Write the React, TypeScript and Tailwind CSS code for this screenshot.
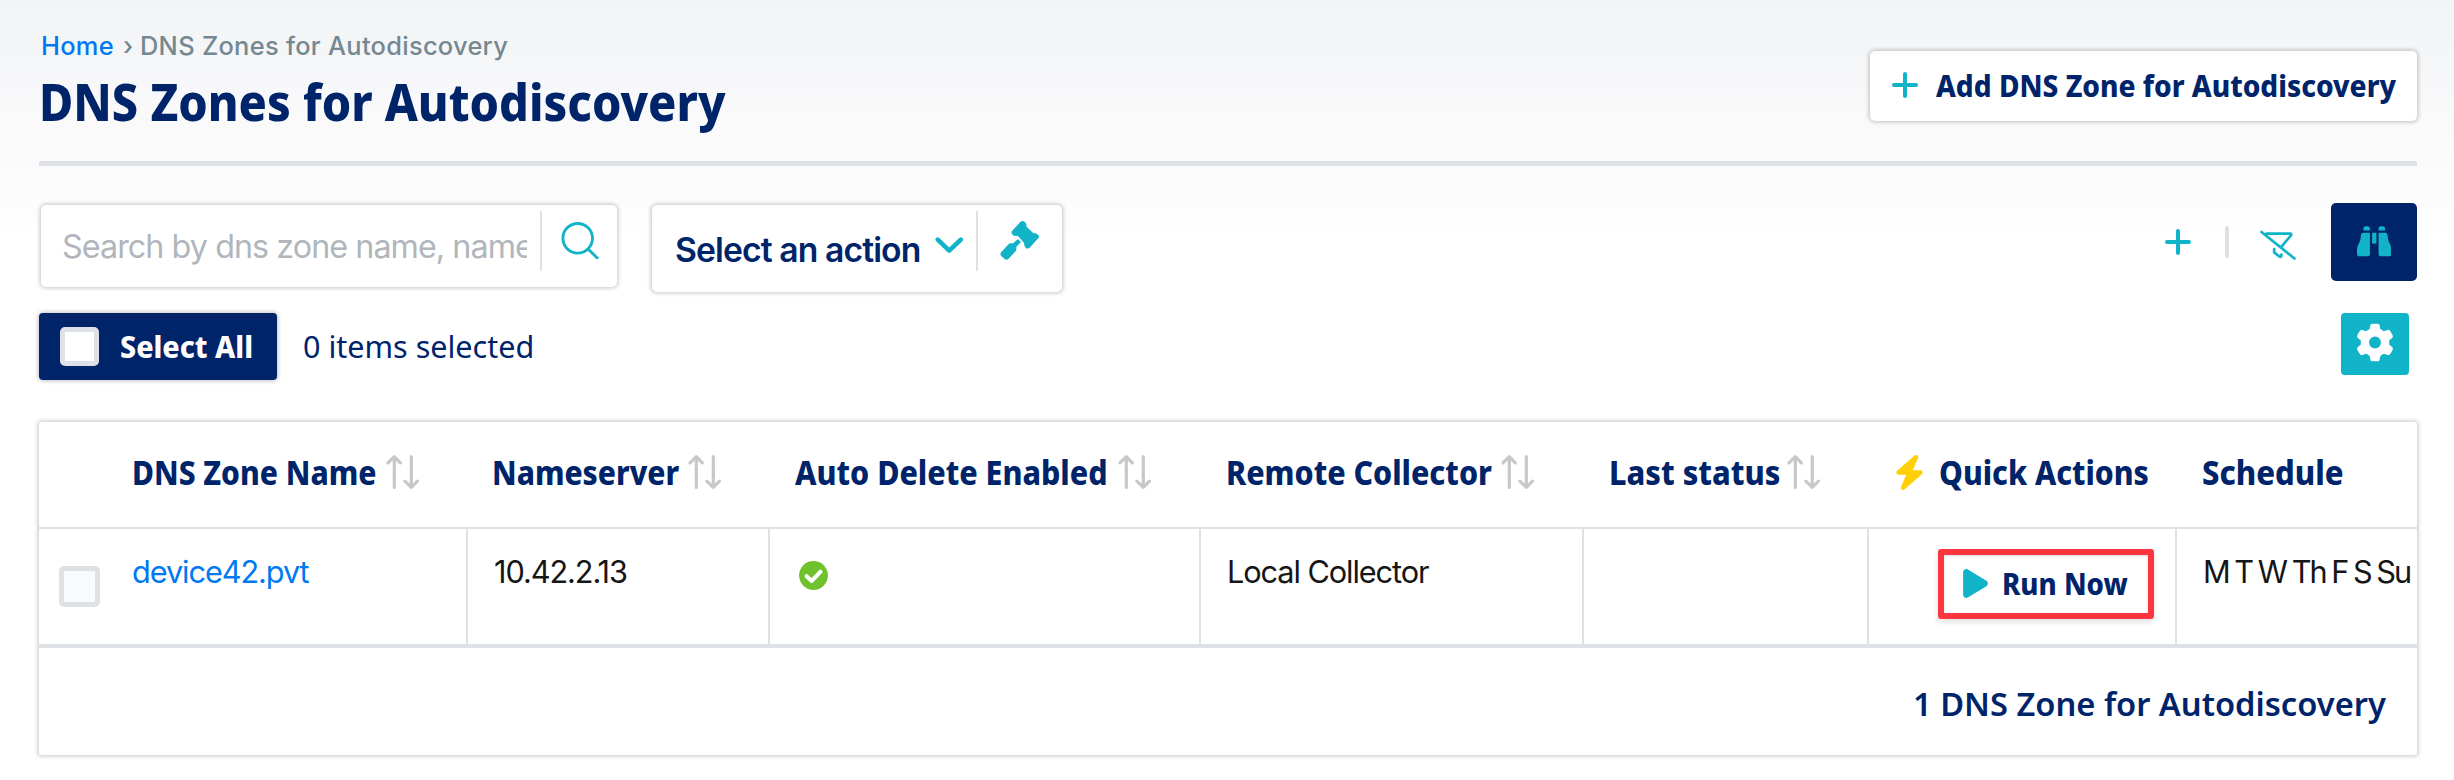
import type { ReactNode } from "react";
import { FaBinoculars, FaBolt, FaGear, FaPlay } from "react-icons/fa6";

function Plus() {
  return (
    <svg width="26" height="26" viewBox="0 0 26 26" fill="none" stroke="#10b3c8" strokeWidth="4" strokeLinecap="round" className="shrink-0">
      <path d="M13 2v22M2 13h22" />
    </svg>
  );
}

function SortArrows() {
  return (
    <svg width="33" height="36" viewBox="0 0 33 36" fill="none" stroke="#c8c8c8" strokeWidth="3.2" strokeLinecap="round" strokeLinejoin="round" className="ml-[9px] shrink-0">
      <path d="M8.3 33.5V2.8M2 8.8l6.3-6.2 6 6.2M25.3 2.5v30.7M18.9 27.2l6.4 6.2 6.2-6.2" />
    </svg>
  );
}

function SearchIcon() {
  return (
    <svg width="38" height="38" viewBox="0 0 38 38" fill="none" stroke="#10b3c8" strokeWidth="2.9" strokeLinecap="round">
      <circle cx="16.7" cy="17.3" r="14.8" />
      <path d="M27 28l9.3 9" />
    </svg>
  );
}

function Gavel() {
  return (
    <svg width="41" height="41" viewBox="0 0 41 41" fill="#10b3c8">
      <path d="M21.5 1.8Q23.9.2 26 2.2T27.2 6.3L34.3 13.3Q36.8 12.8 38.6 14.4Q41.2 16.4 39 18.6L30.6 27.8Q28.6 29.6 26.5 27.4Q24.8 25.8 25.3 23.3L18.7 15.8Q15.6 16.6 13.7 14.9Q11.6 12.6 13.2 10.8Z" />
      <path d="M18.7 18.9L22 22L17.4 26.8V29Q17.3 30.4 16.4 31.4L9.3 39Q7.4 40.6 5.6 39L2.2 36Q.6 34 2.2 32.3L9.2 24.4Q10.4 23.2 12 23.2H14.3Z" />
    </svg>
  );
}

function FilterSlash() {
  return (
    <svg width="38" height="32" viewBox="0 0 38 32" fill="none" stroke="#10b3c8" strokeWidth="2.7" strokeLinecap="round" strokeLinejoin="round">
      <path d="M2.5 3L35.5 29.5M7.5 4.6H32Q32.6 5.6 31.8 6.6L22.5 17.6M15.2 20v3.4L20.8 27.8Q22.6 28.2 22.4 25.6" />
    </svg>
  );
}

function CheckCircle() {
  return (
    <svg width="29" height="29" viewBox="0 0 29 29" fill="none" className="mt-[9px] ml-[3px]">
      <circle cx="14.5" cy="14.5" r="14.4" fill="#70c22d" />
      <path d="M7.6 15.2L12.6 20L21.6 10.6" stroke="#fff" strokeWidth="4" strokeLinecap="round" strokeLinejoin="round" />
    </svg>
  );
}

function Narrow({ children, width, scale, className = "" }: { children: ReactNode; width: string; scale: string; className?: string }) {
  return (
    <span className={`block shrink-0 ${width}`}>
      <span className={`block w-max origin-left font-['Noto_Sans',sans-serif] whitespace-nowrap ${scale} ${className}`}>{children}</span>
    </span>
  );
}

const panel = "bg-white shadow-[0_0_4px_1px_rgba(0,0,0,0.24)]";
const columns = "grid grid-cols-[429px_302px_431px_383px_285px_308px_240px]";
const th = "text-[33.8px] leading-[40px] font-extrabold";
const td = "border-r-2 border-[#dee2e6] pt-[23px] pl-[26px]";

function Box({ className }: { className: string }) {
  return <span className={`block shrink-0 rounded-[5px] border-[5px] border-[#dee2e6] ${className}`} />;
}

export default function App() {
  return (
    <div className="h-[780px] w-[2454px] overflow-hidden bg-white bg-[linear-gradient(180deg,#f3f4f6_0px,#f5f6f8_60px,#fafafb_125px,#fcfcfc_190px,#ffffff_240px)] pr-[37px] pl-[39px] font-['Inter',sans-serif] text-[#00246a]">
      <header className="flex h-[166px] items-start justify-between border-b-[5px] border-[#dee2e6]">
        <div className="pt-[26px]">
          <nav className="flex h-[43px] pl-[2px] text-[25.4px] leading-[40px] font-medium tracking-[0.3px]">
            <a className="w-[82px] text-[#0079f2]">Home</a>
            <span className="w-[17px] text-[#748892]">›</span>
            <span className="text-[#748892]">DNS Zones for Autodiscovery</span>
          </nav>
          <h1>
            <Narrow width="w-[690px]" scale="scale-x-[0.911]" className="text-[51.4px] leading-[64px] font-extrabold">DNS Zones for Autodiscovery</Narrow>
          </h1>
        </div>
        <button className={`mt-[51px] flex h-[70px] w-[547px] items-center rounded-[5px] pb-[2px] pl-[22px] ${panel}`}>
          <Plus />
          <Narrow width="ml-[18px] w-[461px]" scale="scale-x-[0.905]" className="text-[31px] leading-[40px] font-extrabold">Add DNS Zone for Autodiscovery</Narrow>
        </button>
      </header>

      <div className="flex items-start pt-[39px]">
        <div className={`ml-[2px] flex h-[82px] w-[576px] rounded-[5px] pl-[21px] ${panel}`}>
          <span className="mt-[21px] h-[46px] w-[465px] overflow-hidden text-[32.3px] leading-[42px] tracking-[-0.95px] whitespace-nowrap text-[#b0b6bb]">Search by dns zone name, name</span>
          <span className="mt-[6px] ml-[13px] h-[60px] w-[2px] bg-[#dee2e6]" />
          <span className="mt-[16px] ml-[19px]"><SearchIcon /></span>
        </div>
        <div className={`ml-[35px] flex h-[87px] w-[410px] rounded-[5px] pl-[23px] ${panel}`}>
          <span className="mt-[25px] w-[248px] text-[33.7px] leading-[40px] font-semibold tracking-[-0.9px] whitespace-nowrap">Select an action</span>
          <svg width="29" height="18" viewBox="0 0 29 18" fill="none" stroke="#10b3c8" strokeWidth="4.6" strokeLinecap="round" strokeLinejoin="round" className="mt-[31px] ml-[12px]">
            <path d="M2.8 3.6L14.2 14.6L25.8 3.6" />
          </svg>
          <span className="mt-[6px] ml-[12px] h-[60px] w-[2px] bg-[#dee2e6]" />
          <span className="mt-[15px] ml-[21px]"><Gavel /></span>
        </div>
        <div className="ml-auto flex items-start">
          <span className="mt-[24px]"><Plus /></span>
          <span className="mt-[21px] ml-[34px] h-[32px] w-[4px] rounded-full bg-[#dee2e6]" />
          <span className="mt-[24px] ml-[30px]"><FilterSlash /></span>
          <button className="-mt-[2px] ml-[34px] flex h-[78px] w-[86px] items-center justify-center rounded-[5px] bg-[#00246a] text-[#10b3c8]">
            <FaBinoculars size={34.5} className="-translate-y-px" />
          </button>
        </div>
      </div>

      <div className="mt-[21px] flex items-start">
        <button className="flex h-[67px] w-[238px] items-center rounded-[4px] bg-[#00246a] pl-[21px] text-white shadow-[0_0_4px_1px_rgba(0,0,0,0.24)]">
          <Box className="h-[39px] w-[39px] bg-white" />
          <Narrow width="ml-[21px] mb-[2px] w-[134px]" scale="scale-x-[0.924]" className="text-[31px] leading-[40px] font-extrabold">Select All</Narrow>
        </button>
        <Narrow width="mt-[13px] ml-[26px] w-[240px]" scale="scale-x-[0.985]" className="text-[31px] leading-[40px]">0 items selected</Narrow>
        <button className="mr-[8px] ml-auto flex h-[62px] w-[68px] items-center justify-center rounded-[4px] bg-[#10b3c8] text-white">
          <FaGear size={38} className="-translate-y-[1.5px]" />
        </button>
      </div>

      <section className={`mt-[42px] h-[333px] w-[2378px] rounded-[2px] ${panel}`}>
        <div className={`${columns} h-[107px] items-center border-b-2 border-[#dee2e6] pb-[5px]`}>
          <div className="flex items-center pl-[93px]"><Narrow width="w-[245px]" scale="scale-x-[0.887]" className={th}>DNS Zone Name</Narrow><SortArrows /></div>
          <div className="flex items-center pl-[24px]"><Narrow width="w-[187px]" scale="scale-x-[0.886]" className={th}>Nameserver</Narrow><SortArrows /></div>
          <div className="flex items-center pl-[25px]"><Narrow width="w-[314px]" scale="scale-x-[0.899]" className={th}>Auto Delete Enabled</Narrow><SortArrows /></div>
          <div className="flex items-center pl-[25px]"><Narrow width="w-[266px]" scale="scale-x-[0.898]" className={th}>Remote Collector</Narrow><SortArrows /></div>
          <div className="flex items-center pl-[25px]"><Narrow width="w-[169px]" scale="scale-x-[0.91]" className={th}>Last status</Narrow><SortArrows /></div>
          <div className="flex items-center pl-[23px]"><FaBolt size={35} color="#ffd008" className="shrink-0" /><Narrow width="ml-[12px] w-[212px]" scale="scale-x-[0.89]" className={th}>Quick Actions</Narrow></div>
          <div className="flex items-center pl-[25px]"><Narrow width="w-[142px]" scale="scale-x-[0.917]" className={th}>Schedule</Narrow></div>
        </div>
        <div className={`${columns} h-[119px] border-b-4 border-[#dee2e6] text-[30.7px] leading-[40px] tracking-[-1.08px] whitespace-nowrap text-[#161616]`}>
          <div className="flex border-r-2 border-[#dee2e6] pl-[20px]">
            <Box className="mt-[37px] h-[41px] w-[41px] bg-[#f9fafb]" />
            <a className="mt-[23px] ml-[32px] text-[#0079f2]">device42.pvt</a>
          </div>
          <div className={td}>10.42.2.13</div>
          <div className={td}><CheckCircle /></div>
          <div className={td}>Local Collector</div>
          <div className={td} />
          <div className="border-r-2 border-[#dee2e6] pt-[20px] pl-[69px]">
            <button className="flex h-[70px] w-[216px] items-center rounded-[3px] border-[6px] border-[#fb3640] pb-[2px] pl-[19px] tracking-normal text-[#00246a] shadow-[0_3px_6px_rgba(0,0,0,0.12),inset_0_1px_3px_rgba(0,0,0,0.15)]">
              <FaPlay size={33} color="#10b3c8" className="w-[25px]! shrink-0" />
              <Narrow width="ml-[14px] w-[125px]" scale="scale-x-[0.89]" className="text-[31px] leading-[40px] font-extrabold">Run Now</Narrow>
            </button>
          </div>
          <div className="pt-[23px] pl-[26px] tracking-[-2px] [word-spacing:-1px]">M T W Th F S Su</div>
        </div>
        <div className="flex justify-end pt-[36px] pr-[33px]">
          <Narrow width="w-[471px]" scale="scale-x-[0.99]" className="text-[33px] leading-[40px] font-semibold">1 DNS Zone for Autodiscovery</Narrow>
        </div>
      </section>
    </div>
  );
}
